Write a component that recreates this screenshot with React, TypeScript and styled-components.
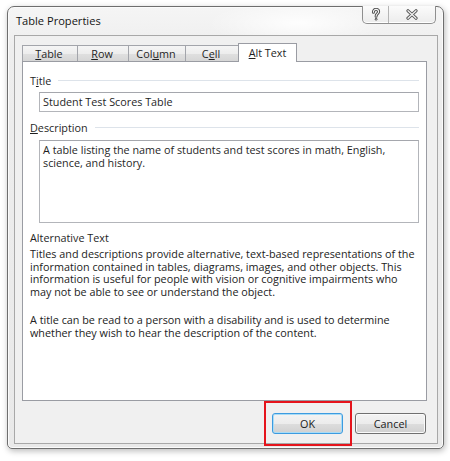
import React from "react";
import styled, { createGlobalStyle } from "styled-components";

const GlobalStyle = createGlobalStyle`
  html, body { margin: 0; padding: 0; background: #ffffff; }
  body { font-family: "Open Sans", "Noto Sans", sans-serif; color: #1f1f1f; }
  * { box-sizing: border-box; }
`;

const Page = styled.div`
  width: 450px;
  height: 461px;
  padding: 6px 0 0 7px;
`;

const Window = styled.div`
  width: 437px;
  height: 443px;
  border: 1px solid #6e6e6e;
  border-radius: 7px 7px 5px 5px;
  background:
    radial-gradient(ellipse 90px 22px at 290px 16px, rgba(255, 255, 255, 0.9), rgba(255, 255, 255, 0) 100%),
    linear-gradient(to bottom, #f5f5f5 0px, #eeeeee 40px, #e9e9e9 100%);
  box-shadow: 1px 2px 6px rgba(0, 0, 0, 0.28), inset 0 0 0 1px #fbfbfb;
  display: flex;
  flex-direction: column;
  padding: 0 5px 4px 6px;
`;

const TitleBar = styled.div`
  height: 28px;
  display: flex;
  align-items: flex-start;
`;

const TitleText = styled.div`
  font-size: 11.1px;
  line-height: 14px;
  padding: 7px 0 0 2px;
  color: #141414;
`;

const CaptionGroup = styled.div`
  margin-left: auto;
  margin-right: 2px;
  margin-top: -1px;
  display: flex;
  height: 18px;
  border: 1px solid #8f8f8f;
  border-top: none;
  border-radius: 0 0 5px 5px;
  overflow: hidden;
  background: linear-gradient(to bottom, #fbfbfb, #ececec);
  box-shadow: inset 0 -1px 0 #ffffff;
`;

const CaptionButton = styled.div<{ $w: number; $sep?: boolean }>`
  width: ${(p) => p.$w}px;
  height: 100%;
  display: flex;
  align-items: center;
  justify-content: center;
  border-right: ${(p) => (p.$sep ? "1px solid #b4b4b4" : "none")};
`;

const Client = styled.div`
  flex: 1;
  border: 1px solid #a8a8a8;
  background: #f0f0f0;
  display: flex;
  flex-direction: column;
  padding: 7px 10px 0 7px;
`;

const TabStrip = styled.div`
  height: 19px;
  display: flex;
  align-items: flex-end;
  margin-bottom: -1px;
  position: relative;
  z-index: 1;
`;

const Tab = styled.div<{ $w: number; $active?: boolean }>`
  width: ${(p) => p.$w}px;
  height: ${(p) => (p.$active ? 19 : 16)}px;
  margin-bottom: ${(p) => (p.$active ? 0 : 1)}px;
  margin-left: -1px;
  &:first-child { margin-left: 0; }
  border: 1px solid ${(p) => (p.$active ? "#9a9ca3" : "#a3a5ab")};
  border-bottom: none;
  background: ${(p) =>
    p.$active
      ? "#ffffff"
      : "linear-gradient(to bottom, #f5f5f5 0%, #ededed 50%, #e0e0e0 51%, #d6d6d6 100%)"};
  display: flex;
  align-items: center;
  justify-content: center;
  font-size: 10.8px;
  color: #1f1f1f;
  padding: 0 ${(p) => (p.$active ? 0 : 2)}px ${(p) => (p.$active ? 2 : 0)}px 0;
  position: relative;
  z-index: ${(p) => (p.$active ? 2 : 1)};
`;

const Panel = styled.div`
  flex: 1;
  background: #ffffff;
  border: 1px solid #9a9ca3;
  padding: 11px 7px 0 7px;
  display: flex;
  flex-direction: column;
`;

const GroupLabel = styled.div<{ $gap: number }>`
  display: flex;
  align-items: center;
  font-size: 10.8px;
  line-height: 15px;
  margin-top: ${(p) => p.$gap}px;
  color: #1f1f1f;
  &::after {
    content: "";
    flex: 1;
    height: 1px;
    margin: 0 0 0 7px;
    background: #dde3ea;
  }
`;

const PlainLabel = styled.div`
  font-size: 10.8px;
  line-height: 15px;
  margin-top: 7px;
  color: #1f1f1f;
`;

const Field = styled.div<{ $h: number; $gap: number }>`
  margin: ${(p) => p.$gap}px 0 0 9px;
  height: ${(p) => p.$h}px;
  border: 1px solid #b3b5ba;
  border-top-color: #a5a7ad;
  background: #ffffff;
  font-size: 10.8px;
  line-height: 12.8px;
  padding: 3px 3px;
  color: #1f1f1f;
  white-space: nowrap;
`;

const Body = styled.div`
  font-size: 10.8px;
  line-height: 12.7px;
  margin-top: 3px;
  white-space: nowrap;
  color: #222222;
`;

const Para = styled.p<{ $gap: number }>`
  margin: ${(p) => p.$gap}px 0 0 0;
`;

const ButtonRow = styled.div`
  display: flex;
  justify-content: flex-end;
  gap: 12px;
  padding: 10px 1px 9px 0;
`;

const ButtonWrap = styled.div`
  position: relative;
`;

const Button = styled.button<{ $default?: boolean }>`
  width: 71px;
  height: 21px;
  border-radius: 3px;
  border: 1px solid ${(p) => (p.$default ? "#3c9be0" : "#707070")};
  background: linear-gradient(to bottom, #f3f3f3 0%, #ececec 50%, #dddddd 51%, #d0d0d0 100%);
  box-shadow: ${(p) =>
    p.$default ? "inset 0 0 0 1px #a9dcf6" : "inset 0 0 0 1px #fafafa"};
  font-family: "Open Sans", "Noto Sans", sans-serif;
  font-size: 10.8px;
  color: #1a1a1a;
  padding: 0;
`;

const Highlight = styled.div`
  position: absolute;
  left: -8px;
  right: -9px;
  top: -10px;
  bottom: -12px;
  border: 2px solid #e5141c;
  pointer-events: none;
`;

const HelpIcon = () => (
  <svg width="10" height="14" viewBox="0 0 10 14">
    <g fill="none" strokeLinecap="round" strokeLinejoin="round">
      <path d="M2.4 4.2 C2.4 2.2 3.6 1.4 5 1.4 C6.6 1.4 7.6 2.4 7.6 3.8 C7.6 5.6 5.1 5.9 5.1 8.2" stroke="#4d4d4d" strokeWidth="3" />
      <circle cx="5.1" cy="11.3" r="1.3" fill="#4d4d4d" />
      <path d="M2.4 4.2 C2.4 2.2 3.6 1.4 5 1.4 C6.6 1.4 7.6 2.4 7.6 3.8 C7.6 5.6 5.1 5.9 5.1 8.2" stroke="#f4f4f4" strokeWidth="1.1" />
      <circle cx="5.1" cy="11.3" r="0.5" fill="#f4f4f4" />
    </g>
  </svg>
);

const CloseIcon = () => (
  <svg width="12" height="11" viewBox="0 0 12 11">
    <g fill="none" strokeLinecap="round">
      <path d="M2 1.8 L10 9.2 M10 1.8 L2 9.2" stroke="#555" strokeWidth="3.2" />
      <path d="M2 1.8 L10 9.2 M10 1.8 L2 9.2" stroke="#f2f2f2" strokeWidth="1.3" />
    </g>
  </svg>
);

const tabs = [
  { key: "t", w: 56, pre: "", acc: "T", post: "able" },
  { key: "r", w: 52, pre: "", acc: "R", post: "ow" },
  { key: "c", w: 58, pre: "Col", acc: "u", post: "mn" },
  { key: "e", w: 54, pre: "C", acc: "e", post: "ll" },
  { key: "a", w: 59, pre: "", acc: "A", post: "lt Text", active: true },
];

export default function App() {
  return (
    <>
      <GlobalStyle />
      <Page>
        <Window>
          <TitleBar>
            <TitleText>Table Properties</TitleText>
            <CaptionGroup>
              <CaptionButton $w={26} $sep>
                <HelpIcon />
              </CaptionButton>
              <CaptionButton $w={46}>
                <CloseIcon />
              </CaptionButton>
            </CaptionGroup>
          </TitleBar>
          <Client>
            <TabStrip>
              {tabs.map((t) => (
                <Tab key={t.key} $w={t.w} $active={t.active}>
                  <span>
                    {t.pre}
                    <u>{t.acc}</u>
                    {t.post}
                  </span>
                </Tab>
              ))}
            </TabStrip>
            <Panel>
              <GroupLabel $gap={0}>
                <span>
                  T<u>i</u>tle
                </span>
              </GroupLabel>
              <Field $h={20} $gap={4}>Student Test Scores Table</Field>
              <GroupLabel $gap={8}>
                <span>
                  <u>D</u>escription
                </span>
              </GroupLabel>
              <Field $h={83} $gap={5}>
                A table listing the name of students and test scores in math, English,
                <br />
                science, and history.
              </Field>
              <PlainLabel>Alternative Text</PlainLabel>
              <Body>
                <Para $gap={0}>
                  Titles and descriptions provide alternative, text-based representations of the
                  <br />
                  information contained in tables, diagrams, images, and other objects. This
                  <br />
                  information is useful for people with vision or cognitive impairments who
                  <br />
                  may not be able to see or understand the object.
                </Para>
                <Para $gap={15}>
                  A title can be read to a person with a disability and is used to determine
                  <br />
                  whether they wish to hear the description of the content.
                </Para>
              </Body>
            </Panel>
            <ButtonRow>
              <ButtonWrap>
                <Button $default>OK</Button>
                <Highlight />
              </ButtonWrap>
              <ButtonWrap>
                <Button>Cancel</Button>
              </ButtonWrap>
            </ButtonRow>
          </Client>
        </Window>
      </Page>
    </>
  );
}
